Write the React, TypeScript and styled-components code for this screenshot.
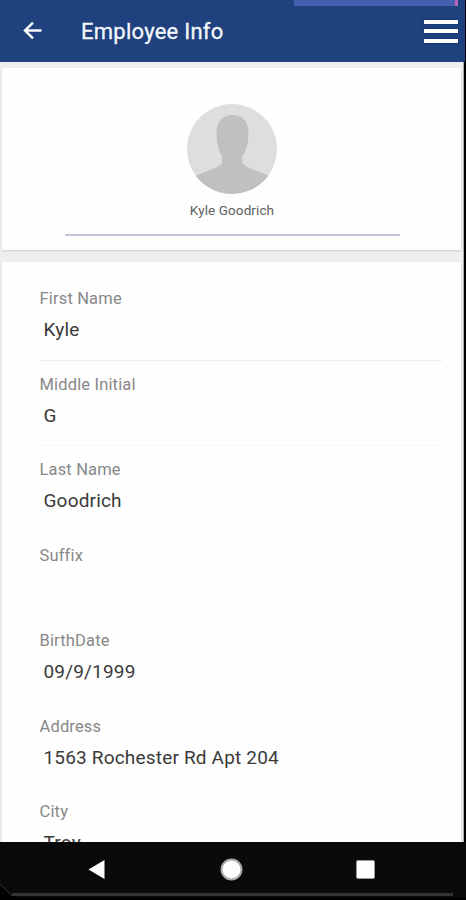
import React from 'react';
import styled, { createGlobalStyle } from 'styled-components';

const GlobalStyle = createGlobalStyle`
  * { box-sizing: border-box; }
  body { margin: 0; background: #000; font-family: Roboto, "Liberation Sans", sans-serif; }
`;

const Screen = styled.div`
  width: 466px;
  height: 900px;
  display: flex;
  flex-direction: column;
  overflow: hidden;
  background: #000;
`;

const Header = styled.header`
  position: relative;
  flex: none;
  width: 465px;
  height: 62px;
  padding: 0 7px 0 22px;
  display: flex;
  align-items: center;
  background: #1f427e;
`;

const LoadingStrip = styled.div`
  position: absolute;
  top: 0;
  left: 294px;
  width: 164px;
  height: 6px;
  background: #4460af;
  border-right: 3px solid #b565b5;
`;

const Title = styled.h1`
  margin: 1px 0 0 38px;
  flex: 1;
  font-size: 22px;
  line-height: 28px;
  font-weight: 400;
  letter-spacing: 0.25px;
  color: #f4f7fc;
  -webkit-text-stroke: 0.3px #f4f7fc;
`;

const MenuButton = styled.div`
  width: 34px;
  height: 23px;
  display: flex;
  flex-direction: column;
  justify-content: space-between;
`;

const MenuBar = styled.span`
  height: 4px;
  background: #fff;
  box-shadow: 0 0 2px #07205f;
`;

const Content = styled.main`
  flex: none;
  width: 464px;
  height: 780px;
  padding: 6px 2px 0;
  display: flex;
  flex-direction: column;
  gap: 12px;
  overflow: hidden;
  background: #efefef;
  border-right: 1px solid #aaa;
`;

const Card = styled.section`
  background: #fefefe;
  box-shadow: 0 1px 2px #ccc;
`;

const ProfileCard = styled(Card)`
  flex: none;
  height: 182px;
  padding: 36px 0 0 1px;
  display: flex;
  flex-direction: column;
  align-items: center;
`;

const ProfileName = styled.div`
  margin-top: 8px;
  font-size: 13.5px;
  line-height: 16px;
  letter-spacing: 0.1px;
  color: #606060;
`;

const ProfileRule = styled.div`
  width: 335px;
  height: 2px;
  margin-top: 16px;
  background: #c3c3d9;
`;

const FormCard = styled(Card)`
  flex: none;
  height: 600px;
  padding: 13px 19px 0 37.5px;
`;

const Field = styled.div<{ $rule: string }>`
  height: 85.5px;
  padding-top: 14px;
  border-bottom: 1px solid ${(p) => p.$rule};
`;

const Label = styled.div`
  font-size: 16.5px;
  line-height: 20px;
  letter-spacing: 0.16px;
  color: #888;
`;

const Value = styled.div`
  margin: 9px 0 0 4px;
  font-size: 19px;
  line-height: 24px;
  letter-spacing: 0.18px;
  color: #3a3a3a;
`;

const NavBar = styled.nav`
  position: relative;
  flex: 1;
  background: #0a0a0a;
  display: flex;
`;

const NavArt = styled.svg`
  display: block;
`;

const fields = [
  { label: 'First Name', value: 'Kyle', rule: '#eeeeee' },
  { label: 'Middle Initial', value: 'G', rule: '#f6f6f6' },
  { label: 'Last Name', value: 'Goodrich', rule: '#fbfbfb' },
  { label: 'Suffix', value: '', rule: '#fefefe' },
  { label: 'BirthDate', value: '09/9/1999', rule: '#fbfbfb' },
  { label: 'Address', value: '1563 Rochester Rd Apt 204', rule: '#fefefe' },
  { label: 'City', value: 'Troy', rule: '#fefefe' },
];

const BackArrow = () => (
  <svg width="21" height="20" viewBox="0 0 21 20" fill="none" stroke="#f4f7fc" strokeWidth="2.5">
    <path d="M19.500 9.500H3M11 1.600L3 9.500L11 17.400" />
  </svg>
);

const Avatar = () => (
  <svg width="90" height="90" viewBox="0 0 90 90">
    <defs>
      <clipPath id="avatar-circle"><circle cx="45" cy="45" r="45" /></clipPath>
    </defs>
    <g clipPath="url(#avatar-circle)">
      <rect width="90" height="90" fill="#dedede" />
      <path
        fill="#c0c0c0"
        d="M45.500 11C55.500 11 61.500 18 61.500 28C61.500 38 60 46 55.500 52V59C58 63 66 65 81 71.500L90 90H0L9 72C24 65 33 63 35 59V52C31 46 29.500 38 29.500 28C29.500 18 35.500 11 45.500 11Z"
      />
    </g>
  </svg>
);

export default function App() {
  return (
    <>
      <GlobalStyle />
      <Screen>
        <Header>
          <LoadingStrip />
          <BackArrow />
          <Title>Employee Info</Title>
          <MenuButton>
            <MenuBar />
            <MenuBar />
            <MenuBar />
          </MenuButton>
        </Header>
        <Content>
          <ProfileCard>
            <Avatar />
            <ProfileName>Kyle Goodrich</ProfileName>
            <ProfileRule />
          </ProfileCard>
          <FormCard>
            {fields.map((f) => (
              <Field key={f.label} $rule={f.rule}>
                <Label>{f.label}</Label>
                <Value>{f.value}</Value>
              </Field>
            ))}
          </FormCard>
        </Content>
        <NavBar>
          <NavArt width="466" height="58" viewBox="0 0 466 58">
            <path d="M0 42L13 55H466V58H0Z" fill="#000" />
            <path d="M0 42L12 54" stroke="#303030" strokeWidth="1" />
            <rect x="12" y="51" width="441" height="3" fill="#343434" />
            <path d="M88.500 27.500L104.500 18V37Z" fill="#fff" />
            <circle cx="231.500" cy="27.500" r="10" fill="#fff" stroke="#aaa" strokeWidth="2" />
            <rect x="356.500" y="18.500" width="18" height="18" rx="1.500" fill="#fff" stroke="#999" strokeWidth="1" />
          </NavArt>
        </NavBar>
      </Screen>
    </>
  );
}
